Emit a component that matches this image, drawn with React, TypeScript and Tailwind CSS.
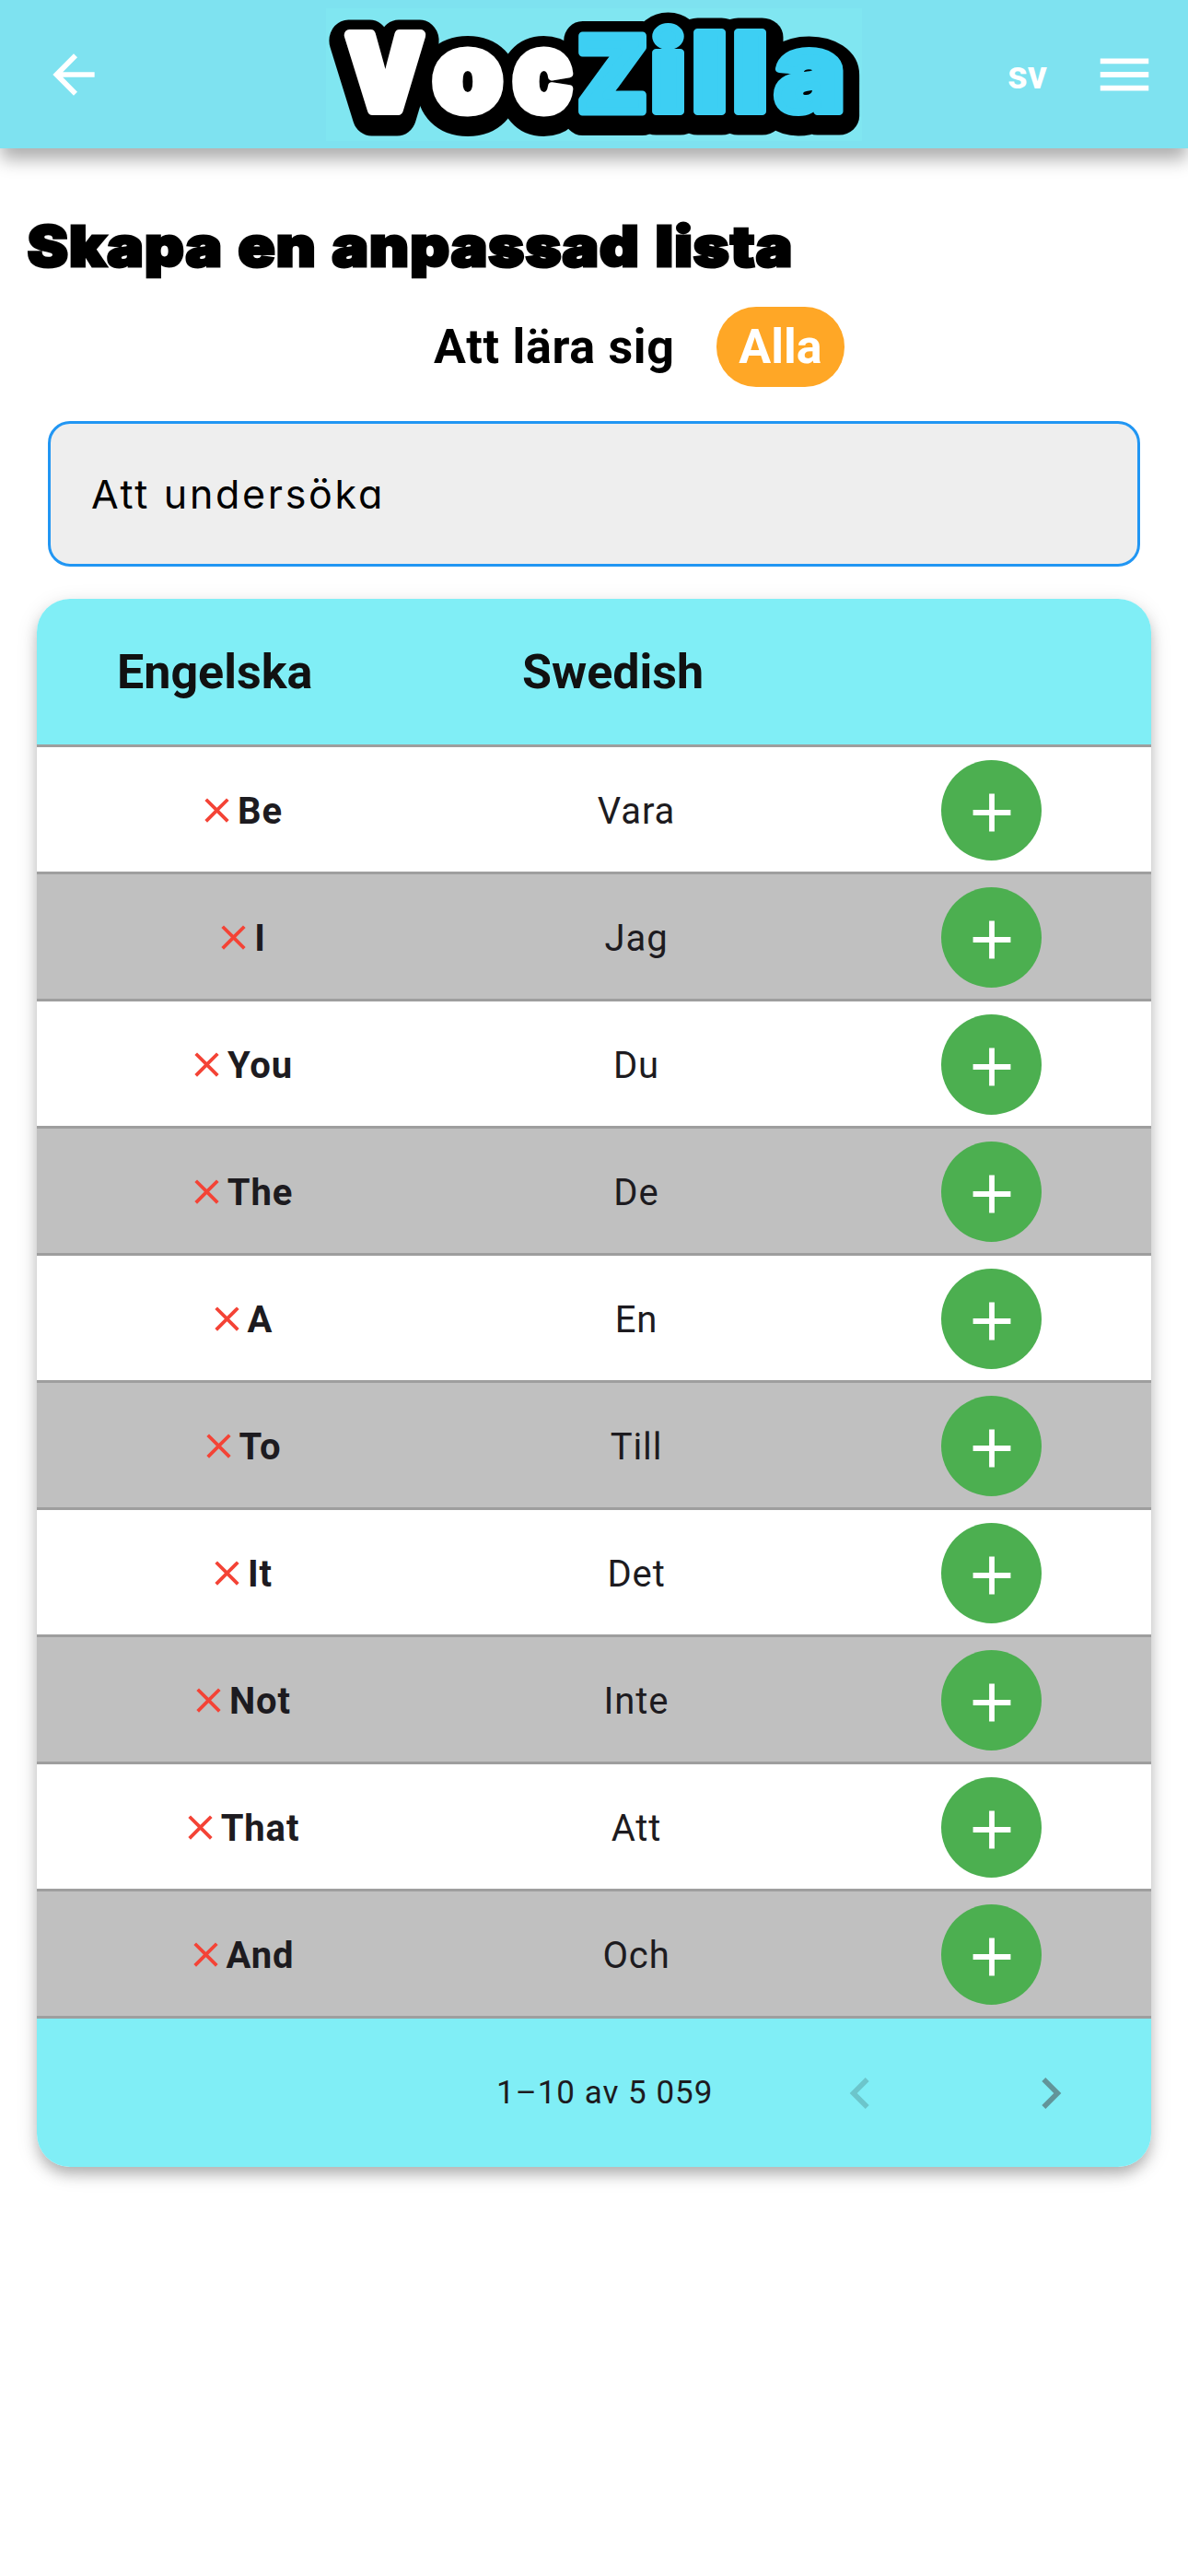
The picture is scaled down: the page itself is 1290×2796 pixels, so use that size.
import { MdAdd, MdArrowBack, MdChevronLeft, MdChevronRight, MdClose, MdMenu } from "react-icons/md";

const words = [
  ["Be", "Vara"],
  ["I", "Jag"],
  ["You", "Du"],
  ["The", "De"],
  ["A", "En"],
  ["To", "Till"],
  ["It", "Det"],
  ["Not", "Inte"],
  ["That", "Att"],
  ["And", "Och"],
];

type Letter = { x: number; ch: string; stretch: number; size: number; weight: number; fill: string };

// Wordmark letters: left edge, horizontal stretch, font size and extra stroke weight
const letters: Letter[] = [
  { x: 377, ch: "V", stretch: 0.93, size: 111, weight: 12, fill: "#fff" },
  { x: 470, ch: "o", stretch: 1.01, size: 120, weight: 9, fill: "#fff" },
  { x: 557, ch: "c", stretch: 0.89, size: 120, weight: 9, fill: "#fff" },
  { x: 627, ch: "Z", stretch: 0.97, size: 113, weight: 9, fill: "#3dcff3" },
  { x: 706, ch: "i", stretch: 1.12, size: 118, weight: 8, fill: "#3dcff3" },
  { x: 751, ch: "l", stretch: 1.12, size: 118, weight: 8, fill: "#3dcff3" },
  { x: 795, ch: "l", stretch: 1.12, size: 118, weight: 8, fill: "#3dcff3" },
  { x: 841, ch: "a", stretch: 1.07, size: 120, weight: 8, fill: "#3dcff3" },
];

function Wordmark() {
  return (
    <svg width="582" height="144" viewBox="354 9 582 144" className="bg-[#80e6f1]" fontFamily="Inter" fontWeight="900" strokeLinejoin="round">
      <g fill="#000" stroke="#000">
        {letters.map(({ x, ch, stretch, size, weight }, i) => (
          <g key={i} fontSize={size}>
            <text transform={`translate(${ch === "V" ? x - 1 : x} ${ch === "V" ? 125 : 126}) scale(${stretch} 1)`} strokeWidth={weight + 33}>
              {ch}
            </text>
            <text transform={`translate(${x} 124) scale(${stretch} 1)`} strokeWidth={weight + 18}>
              {ch}
            </text>
          </g>
        ))}
      </g>
      {letters.map(({ x, ch, stretch, size, weight, fill }, i) => (
        <text key={i} transform={`translate(${x} ${ch === "V" ? 119 : 121}) scale(${stretch} 1)`} fontSize={size} fill={fill} stroke={fill} strokeWidth={weight}>
          {ch}
        </text>
      ))}
    </svg>
  );
}

export default function App() {
  return (
    <div className="min-h-[2796px] w-[1290px] bg-white font-[Roboto,sans-serif] text-black">
      <header className="relative grid h-[161px] grid-cols-[354px_582px_354px] items-center bg-[#7ee2f0] shadow-[0_13px_18px_-1px_rgba(0,0,0,0.32)]">
        <MdArrowBack className="ml-[46px] size-[68px] text-white" />
        <Wordmark />
        <div className="flex items-center justify-end pr-[34px] text-white">
          <span className="mr-[49px] pt-[2px] text-[42px] leading-none font-bold">sv</span>
          <MdMenu className="size-[70px]" />
        </div>
      </header>

      <main>
        <h1 className="h-[172px] w-fit origin-left scale-x-[1.104] pt-[66px] pl-[27px] font-[Inter,sans-serif] text-[60px] leading-[80px] font-black tracking-[1px] whitespace-nowrap [word-spacing:2px] [-webkit-text-stroke:3px_black]">
          Skapa en anpassad lista
        </h1>

        <div className="flex h-[87px] items-center pl-[471px] text-[52px] leading-none font-bold">
          <span className="w-[307px] tracking-[0.7px]">Att lära sig</span>
          <button className="flex h-[87px] w-[139px] items-center justify-center rounded-[43px] bg-[#ffa726] text-white">Alla</button>
        </div>

        <div className="mt-[37px] ml-[52px] flex h-[158px] w-[1186px] items-center rounded-[24px] border-[3px] border-[#2196f3] bg-[#eeeeee] pl-[44px] font-[Inter,sans-serif] text-[43px] tracking-[2.7px] [font-feature-settings:'cv11']">
          Att undersöka
        </div>

        <section className="mx-[40px] mt-[35px] overflow-hidden rounded-[36px] shadow-[0_9px_15px_-2px_rgba(0,0,0,0.25),0_6px_24px_rgba(0,0,0,0.12)]">
          <div className="grid h-[161px] grid-cols-[438px_424px_348px] items-center border-b-[3px] border-[#9e9e9e] bg-[#80eef6] pt-[2px] text-[52px] leading-none font-bold text-[#111111]">
            <span className="pl-[87px]">Engelska</span>
            <span className="pl-[89px]">Swedish</span>
          </div>

          {words.map(([en, sv]) => (
            <div
              key={en}
              className="grid h-[138px] grid-cols-[440px_422px_348px] items-center border-b-[3px] border-[#9e9e9e] pt-[2px] text-[40px] leading-none tracking-[0.9px] text-[#1d1b20] even:bg-white odd:bg-[#c0c0c0]"
            >
              <div className="flex items-center justify-center">
                <MdClose className="size-[45px] text-[#f44336]" />
                <span className="pt-[2px] font-bold">{en}</span>
              </div>
              <span className="pt-[2px] text-center">{sv}</span>
              <div className="flex">
                <button className="ml-[120px] flex size-[109px] items-center justify-center rounded-full bg-[#4caf50] pt-[5px] text-white">
                  <MdAdd className="size-[70px]" />
                </button>
              </div>
            </div>
          ))}

          <footer className="flex h-[161px] items-center bg-[#80eef6] pl-[499px] text-[35px] leading-none tracking-[1px] text-[#1d1b20]">
            <span className="w-[361px] whitespace-nowrap">1–10 av 5 059</span>
            <MdChevronLeft className="size-[68px] text-[#6cc5cb]" />
            <MdChevronRight className="ml-[139px] size-[68px] text-[#629499]" />
          </footer>
        </section>
      </main>
    </div>
  );
}
